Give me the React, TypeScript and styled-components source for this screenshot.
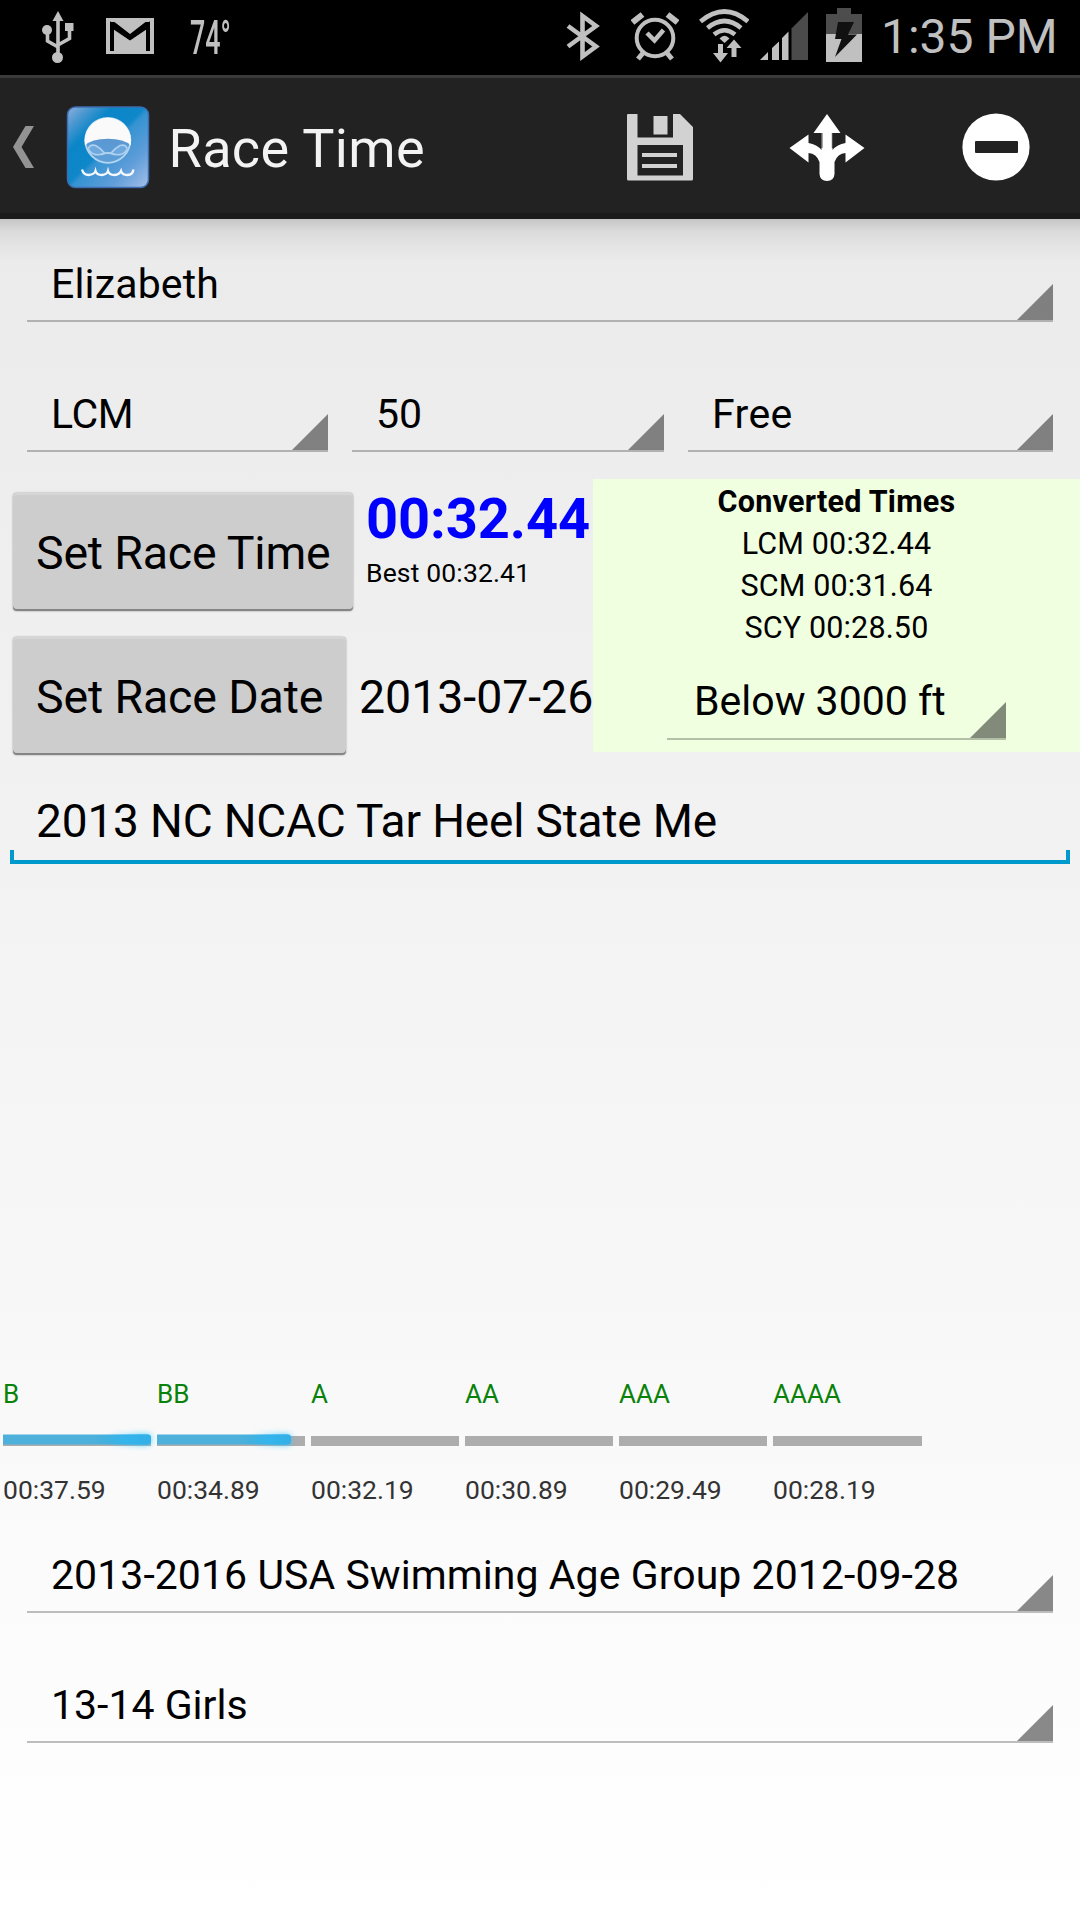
import React from 'react';
import styled, { createGlobalStyle } from 'styled-components';

const GlobalStyle = createGlobalStyle`
  *, *::before, *::after { box-sizing: border-box; }
  body { margin: 0; background: #000; font-family: Roboto, "Liberation Sans", sans-serif; }
`;

const Screen = styled.div`
  width: 1080px;
  height: 1920px;
  display: flex;
  flex-direction: column;
  overflow: hidden;
  color: #000;
  background: linear-gradient(#e8e8e8, #ffffff);
`;

const StatusBar = styled.header`
  height: 75px;
  display: flex;
  align-items: stretch;
  background: #000;
  color: #c0c0c0;
  flex: none;
`;

const StatusGroup = styled.div<{ $left: number; $gap: number }>`
  display: flex;
  gap: ${(p) => p.$gap}px;
  margin-left: ${(p) => p.$left}px;
`;

const Label = styled.span<{
  $size: number;
  $line?: number;
  $spacing?: number;
  $weight?: number;
  $color?: string;
}>`
  font-size: ${(p) => p.$size}px;
  line-height: ${(p) => p.$line ?? 48}px;
  letter-spacing: ${(p) => p.$spacing ?? 0}px;
  font-weight: ${(p) => p.$weight ?? 400};
  color: ${(p) => p.$color ?? 'inherit'};
  white-space: pre;
`;

const Temperature = styled(Label)`
  width: 44px;
  margin-left: 36px;
  padding-top: 9px;
  transform: scaleX(0.56);
  transform-origin: left;
`;

const Clock = styled(Label)`
  margin-left: 19px;
  padding-top: 13px;
`;

const ActionBar = styled.nav`
  height: 144px;
  flex: none;
  display: flex;
  background: #222;
  border-top: 3px solid #3a3a3a;
  border-bottom: 6px solid #1b1b1b;
  color: #f3f3f3;
`;

const Title = styled(Label)`
  margin-left: 18.5px;
  padding-top: 39px;
  width: 458px;
`;

const Actions = styled.div`
  display: flex;
  gap: 96.5px;
`;

const Main = styled.main`
  flex: 1;
  display: flex;
  flex-direction: column;
  background: linear-gradient(rgba(0, 0, 0, 0.16), rgba(0, 0, 0, 0.07) 12px, rgba(0, 0, 0, 0.03) 26px, transparent 44px) no-repeat;
`;

const SpinnerRow = styled.div<{ $height: number }>`
  height: ${(p) => p.$height}px;
  display: flex;
  align-items: flex-end;
  gap: 24px;
  padding: 0 27px;
`;

const SpinnerBox = styled.div<{ $width: number; $inset: number }>`
  width: ${(p) => p.$width}px;
  height: 74px;
  display: flex;
  justify-content: space-between;
  align-items: flex-end;
  padding-left: ${(p) => p.$inset}px;
  border-bottom: 2px solid rgba(0, 0, 0, 0.25);
`;

const SpinnerText = styled(Label)<{ $lift: number }>`
  margin-bottom: ${(p) => p.$lift}px;
`;

const Corner = styled.i`
  width: 36px;
  height: 36px;
  background: rgba(0, 0, 0, 0.46);
  clip-path: polygon(100% 0, 100% 100%, 0 100%);
  flex: none;
`;

const RaceSection = styled.section`
  height: 276px;
  margin-top: 27px;
  display: grid;
  grid-template-columns: 593px 487px;
  align-items: start;
`;

const RaceFields = styled.div`
  display: flex;
  flex-direction: column;
  gap: 26px;
  padding: 14px 0 0 13px;
`;

const FieldRow = styled.div<{ $gap: number }>`
  display: flex;
  gap: ${(p) => p.$gap}px;
  height: 118px;
`;

const HoloButton = styled.button<{ $width: number }>`
  width: ${(p) => p.$width}px;
  height: 118px;
  flex: none;
  margin: 0;
  padding: 1px 0 0 23px;
  border: 0;
  border-radius: 4px;
  background: #cdcdcd;
  color: #000;
  font-family: inherit;
  text-align: left;
  box-shadow: inset 0 -2px 0 #858585, inset 0 2px 0 #d6d6d6, 0 0 2px rgba(0, 0, 0, 0.4);
`;

const TimeStack = styled.div`
  display: flex;
  flex-direction: column;
  gap: 10px;
`;

const DateText = styled(Label)`
  padding-top: 36px;
`;

const Converted = styled.aside`
  height: 273px;
  display: flex;
  flex-direction: column;
  align-items: center;
  padding-top: 2px;
  background: #f0ffe0;
`;

const AltitudeRow = styled.div`
  margin: 17px 0 0 0;
`;

const MeetField = styled.div`
  height: 109px;
  margin: 0 10px;
  flex: none;
  display: flex;
  flex-direction: column;
  justify-content: flex-end;
`;

const MeetText = styled(Label)`
  padding: 0 0 5px 26px;
`;

const Underline = styled.div`
  height: 14px;
  border: 4px solid #0099cc;
  border-top: 0;
`;

const Levels = styled.section`
  margin: auto 0 5px 3px;
  display: grid;
  grid-template-columns: repeat(5, 148px) 149px;
  column-gap: 6px;
`;

const Level = styled.div`
  display: flex;
  flex-direction: column;
`;

const Track = styled.div`
  height: 10px;
  margin: 27px 0 29px;
  background: #adadad;
`;

const Fill = styled.div`
  height: 10px;
  border-radius: 0 3px 3px 0;
  background: linear-gradient(90deg, #4db1db, #4db1db 60%, #33b0e6 92%);
  transform: translateY(-1.5px);
  &::after {
    content: '';
    display: block;
    height: 10px;
    margin-left: 70%;
    border-radius: 4px;
    background: linear-gradient(90deg, rgba(51, 181, 229, 0), #33b0e8 80%);
    filter: drop-shadow(0 0 3px rgba(51, 200, 255, 0.9));
  }
`;

const BottomSpinners = styled.div`
  padding-bottom: 177px;
`;

type SpinnerProps = { text: string; width: number; inset?: number; spacing?: number; lift?: number };

function Spinner({ text, width, inset = 24, spacing = 0, lift = 12 }: SpinnerProps) {
  return (
    <SpinnerBox $width={width} $inset={inset}>
      <SpinnerText $size={41} $spacing={spacing} $lift={lift}>{text}</SpinnerText>
      <Corner />
    </SpinnerBox>
  );
}

const UsbIcon = () => (
  <svg width="34" height="75" viewBox="41 0 34 75" fill="none" stroke="#c0c0c0" strokeWidth="3.6">
    <path d="M58 18V56M47.5 30V41L58 47M69.5 28V38.500L58 45" />
    <g fill="#c0c0c0" stroke="none">
      <path d="M58 11L63.500 21H52.500Z" />
      <circle cx="47" cy="30" r="5" />
      <rect x="65" y="23" width="8.500" height="8" />
      <circle cx="57.500" cy="57.500" r="5.500" />
    </g>
  </svg>
);

const MailIcon = () => (
  <svg width="48" height="75" viewBox="106 0 48 75">
    <path fill="#c0c0c0" d="M106 18H154V54H106Z" />
    <path fill="none" stroke="#000" strokeWidth="4" d="M112 51V25L130 37.500L148 25V51" />
    <path fill="#000" d="M110 22H114.500L130 34L145.500 22H150V27L130 40.500L110 27Z" />
  </svg>
);

const BluetoothIcon = () => (
  <svg width="34" height="75" viewBox="566 0 34 75">
    <path fill="none" stroke="#c0c0c0" strokeWidth="4.600" d="M568 26L596 46.500L582.500 56.500V16L596 26L568 46.500" />
  </svg>
);

const AlarmIcon = () => (
  <svg width="48" height="75" viewBox="631 0 48 75" fill="none" stroke="#c0c0c0">
    <circle cx="655" cy="38" r="18.300" strokeWidth="4" />
    <path strokeWidth="4.500" d="M647 33L654.500 40.500L663.500 30" />
    <path strokeWidth="6" d="M632.500 22.500L642.500 14.500M677.500 22.500L667.500 14.500" />
    <path strokeWidth="5" d="M643 53L638 59M667 53L672 59" />
  </svg>
);

const WifiIcon = () => (
  <svg width="50" height="75" viewBox="699 0 50 75" fill="none" stroke="#c0c0c0" strokeWidth="4.600">
    <path d="M700.500 21.500Q724.500 1.500 748 21.500M707.500 28Q724.500 14 741 28M714 34.500Q724.500 26 735 34.500" />
    <g fill="#c0c0c0" stroke="none">
      <path d="M719.500 38.500Q724.500 33 729.500 38.500L724.500 43Z" />
      <path d="M718 44H723V53H728L720.500 62.500L713 53H718Z" />
      <path d="M731.500 57V48H726.500L734 39.500L741.500 48H736.500V57Z" />
    </g>
  </svg>
);

const SignalIcon = () => (
  <svg width="48" height="75" viewBox="760 0 48 75" fill="#c0c0c0">
    <path d="M760 60L768 52V60ZM772 60V48L779 41.500V60ZM782 60V38L788.500 31.500V60Z" />
    <path fill="#4b4b4b" d="M791.500 60V28.500L808 12V60Z" />
  </svg>
);

const BatteryIcon = () => (
  <svg width="36" height="75" viewBox="826 0 36 75">
    <path fill="#4d4d4d" d="M826 14H837V8H851V14H862V34H826Z" />
    <path fill="#c0c0c0" d="M826 34H862V62H826Z" />
    <path fill="#111" d="M838 22H854L848 34.500H857L835 57L841.500 39H835Z" />
  </svg>
);

const BackIcon = () => (
  <svg width="21" height="135" viewBox="13 78 21 135">
    <path fill="#939393" d="M25.500 126H34L21.500 147L34 168H25.500L13 147Z" />
  </svg>
);

const SwimmerIcon = () => (
  <svg width="84" height="135" viewBox="66.500 78 84 135">
    <defs>
      <linearGradient id="water" x1="0" y1="0" x2="1" y2="1">
        <stop offset="0" stopColor="#8fb0dd" />
        <stop offset="0.140" stopColor="#4a97d0" />
        <stop offset="0.280" stopColor="#0a86c8" />
        <stop offset="0.480" stopColor="#0f87c9" />
        <stop offset="0.520" stopColor="#3593d2" />
        <stop offset="0.750" stopColor="#5f9dd9" />
        <stop offset="1" stopColor="#a5c0e8" />
      </linearGradient>
      <linearGradient id="face" x1="0" y1="0" x2="0" y2="1">
        <stop offset="0.400" stopColor="#5b97d2" />
        <stop offset="1" stopColor="#5d9fd8" />
      </linearGradient>
    </defs>
    <rect x="68" y="107" width="81" height="80.500" rx="8" fill="url(#water)" stroke="#3e6cb0" strokeWidth="1.500" />
    <circle cx="108.300" cy="140.300" r="22.500" fill="url(#face)" stroke="#b5d5f0" strokeWidth="1.800" />
    <path fill="#fafafa" d="M85.500 145.500A23.300 23.300 0 1 1 131.200 145.500Q125 138.700 108.300 138.700Q92 138.700 85.500 145.500Z" />
    <g fill="#6fa8dc" stroke="#aed2f0" strokeWidth="1.600">
      <path d="M89 148Q91 144 96 145.500Q101 148 105 153Q100 156 94 154Q89.500 152 89 148Z" />
      <path d="M127.600 148Q125.600 144 120.600 145.500Q115.600 148 111.600 153Q116.600 156 122.600 154Q127.100 152 127.600 148Z" />
      <path fill="none" strokeWidth="2" d="M102 154.300Q108.300 151.500 114.600 154.300" />
    </g>
    <path fill="none" stroke="#f4f9ff" strokeWidth="2.300" d="M82.500 169.500Q84 175 89 175Q95 174.500 96 171Q97 175 102.500 175Q107.500 174.500 108.500 171Q109.500 175 115 175Q120 174.500 121.500 171Q122.500 175 128 175Q133 175 134 169.500" />
  </svg>
);

const SaveIcon = () => (
  <svg width="66" height="135" viewBox="627 78 66 135">
    <path fill="#d2d2d2" fillRule="evenodd" d="M628 114H637.500V137.500H673V114H680L693 127V179Q693 180.500 691.500 180.500H628.500Q627 180.500 627 179V115Q627 114 628 114ZM637.500 145V175.500H683V145ZM642 153H677V157H642ZM642 164H677V168H642Z" />
    <path fill="#d2d2d2" d="M653.500 116H667.500V134.500H653.500Z" />
  </svg>
);

const SplitIcon = () => (
  <svg width="76" height="135" viewBox="790 78 76 135">
    <path fill="#fff" d="M828 114L841.500 133H833.500V150Q838 144.500 846.500 143V134.500L865.500 148L846.500 162.500V153Q838.500 153.500 835.500 162V174Q835 181 828 181Q821 181 820.500 174V162Q817.500 153.500 809.500 153V162.500L790.500 148L809.500 134.500V143Q818 144.500 822.500 150V133H814.500Z" />
    <path stroke="#222" strokeWidth="0.800" d="M823 133V148M833.300 133V148" />
  </svg>
);

const RemoveIcon = () => (
  <svg width="68" height="135" viewBox="962 78 68 135">
    <circle cx="996" cy="147" r="33.600" fill="#fff" />
    <rect x="975" y="141" width="43" height="12" rx="1" fill="#222" />
  </svg>
);

const conversions = ['LCM 00:32.44', 'SCM 00:31.64', 'SCY 00:28.50'];

const levels = [
  { name: 'B', time: '00:37.59', progress: 100 },
  { name: 'BB', time: '00:34.89', progress: 90.5 },
  { name: 'A', time: '00:32.19', progress: 0 },
  { name: 'AA', time: '00:30.89', progress: 0 },
  { name: 'AAA', time: '00:29.49', progress: 0 },
  { name: 'AAAA', time: '00:28.19', progress: 0 },
];

export default function App() {
  return (
    <>
      <GlobalStyle />
      <Screen>
        <StatusBar>
          <StatusGroup $left={41} $gap={31}>
            <UsbIcon />
            <MailIcon />
          </StatusGroup>
          <Temperature $size={48} $line={58} $weight={500}>74°</Temperature>
          <StatusGroup $left={332} $gap={0}>
            <BluetoothIcon />
          </StatusGroup>
          <StatusGroup $left={31} $gap={20}>
            <AlarmIcon />
            <WifiIcon />
          </StatusGroup>
          <StatusGroup $left={11} $gap={18}>
            <SignalIcon />
            <BatteryIcon />
          </StatusGroup>
          <Clock $size={48}>1:35 PM</Clock>
        </StatusBar>

        <ActionBar>
          <StatusGroup $left={13} $gap={32}>
            <BackIcon />
            <SwimmerIcon />
          </StatusGroup>
          <Title $size={54} $line={64} $spacing={0.35}>Race Time</Title>
          <Actions>
            <SaveIcon />
            <SplitIcon />
            <RemoveIcon />
          </Actions>
        </ActionBar>

        <Main>
          <SpinnerRow $height={103}>
            <Spinner text="Elizabeth" width={1026} spacing={0.15} />
          </SpinnerRow>
          <SpinnerRow $height={130}>
            <Spinner text="LCM" width={301} spacing={-0.3} />
            <Spinner text="50" width={312} />
            <Spinner text="Free" width={365} spacing={0.4} />
          </SpinnerRow>

          <RaceSection>
            <RaceFields>
              <FieldRow $gap={13}>
                <HoloButton $width={340}>
                  <Label $size={46.5} $spacing={-0.2}>Set Race Time</Label>
                </HoloButton>
                <TimeStack>
                  <Label $size={56} $line={52} $weight={700} $spacing={-0.1} $color="#0000ff">00:32.44</Label>
                  <Label $size={26.5} $line={36} $spacing={0.15}>Best 00:32.41</Label>
                </TimeStack>
              </FieldRow>
              <FieldRow $gap={13}>
                <HoloButton $width={333}>
                  <Label $size={46.5} $spacing={-0.15}>Set Race Date</Label>
                </HoloButton>
                <DateText $size={46.5} $spacing={-0.05}>2013-07-26</DateText>
              </FieldRow>
            </RaceFields>
            <Converted>
              <Label $size={30.5} $line={42} $weight={700} $spacing={0.25}>Converted Times</Label>
              {conversions.map((c) => (
                <Label key={c} $size={30.5} $line={42} $spacing={0.15}>{c}</Label>
              ))}
              <AltitudeRow>
                <Spinner text="Below 3000 ft" width={339} inset={27} lift={13} />
              </AltitudeRow>
            </Converted>
          </RaceSection>

          <MeetField>
            <MeetText $size={46} $spacing={-0.16}>2013 NC NCAC Tar Heel State Me</MeetText>
            <Underline />
          </MeetField>

          <Levels>
            {levels.map((l) => (
              <Level key={l.name}>
                <Label $size={26} $line={30} $color="#0a820a">{l.name}</Label>
                <Track>{l.progress > 0 && <Fill style={{ width: `${l.progress}%` }} />}</Track>
                <Label $size={26.5} $line={30} $color="#333">{l.time}</Label>
              </Level>
            ))}
          </Levels>

          <BottomSpinners>
            <SpinnerRow $height={103}>
              <Spinner text="2013-2016 USA Swimming Age Group 2012-09-28" width={1026} spacing={0.055} />
            </SpinnerRow>
            <SpinnerRow $height={130}>
              <Spinner text="13-14 Girls" width={1026} />
            </SpinnerRow>
          </BottomSpinners>
        </Main>
      </Screen>
    </>
  );
}
